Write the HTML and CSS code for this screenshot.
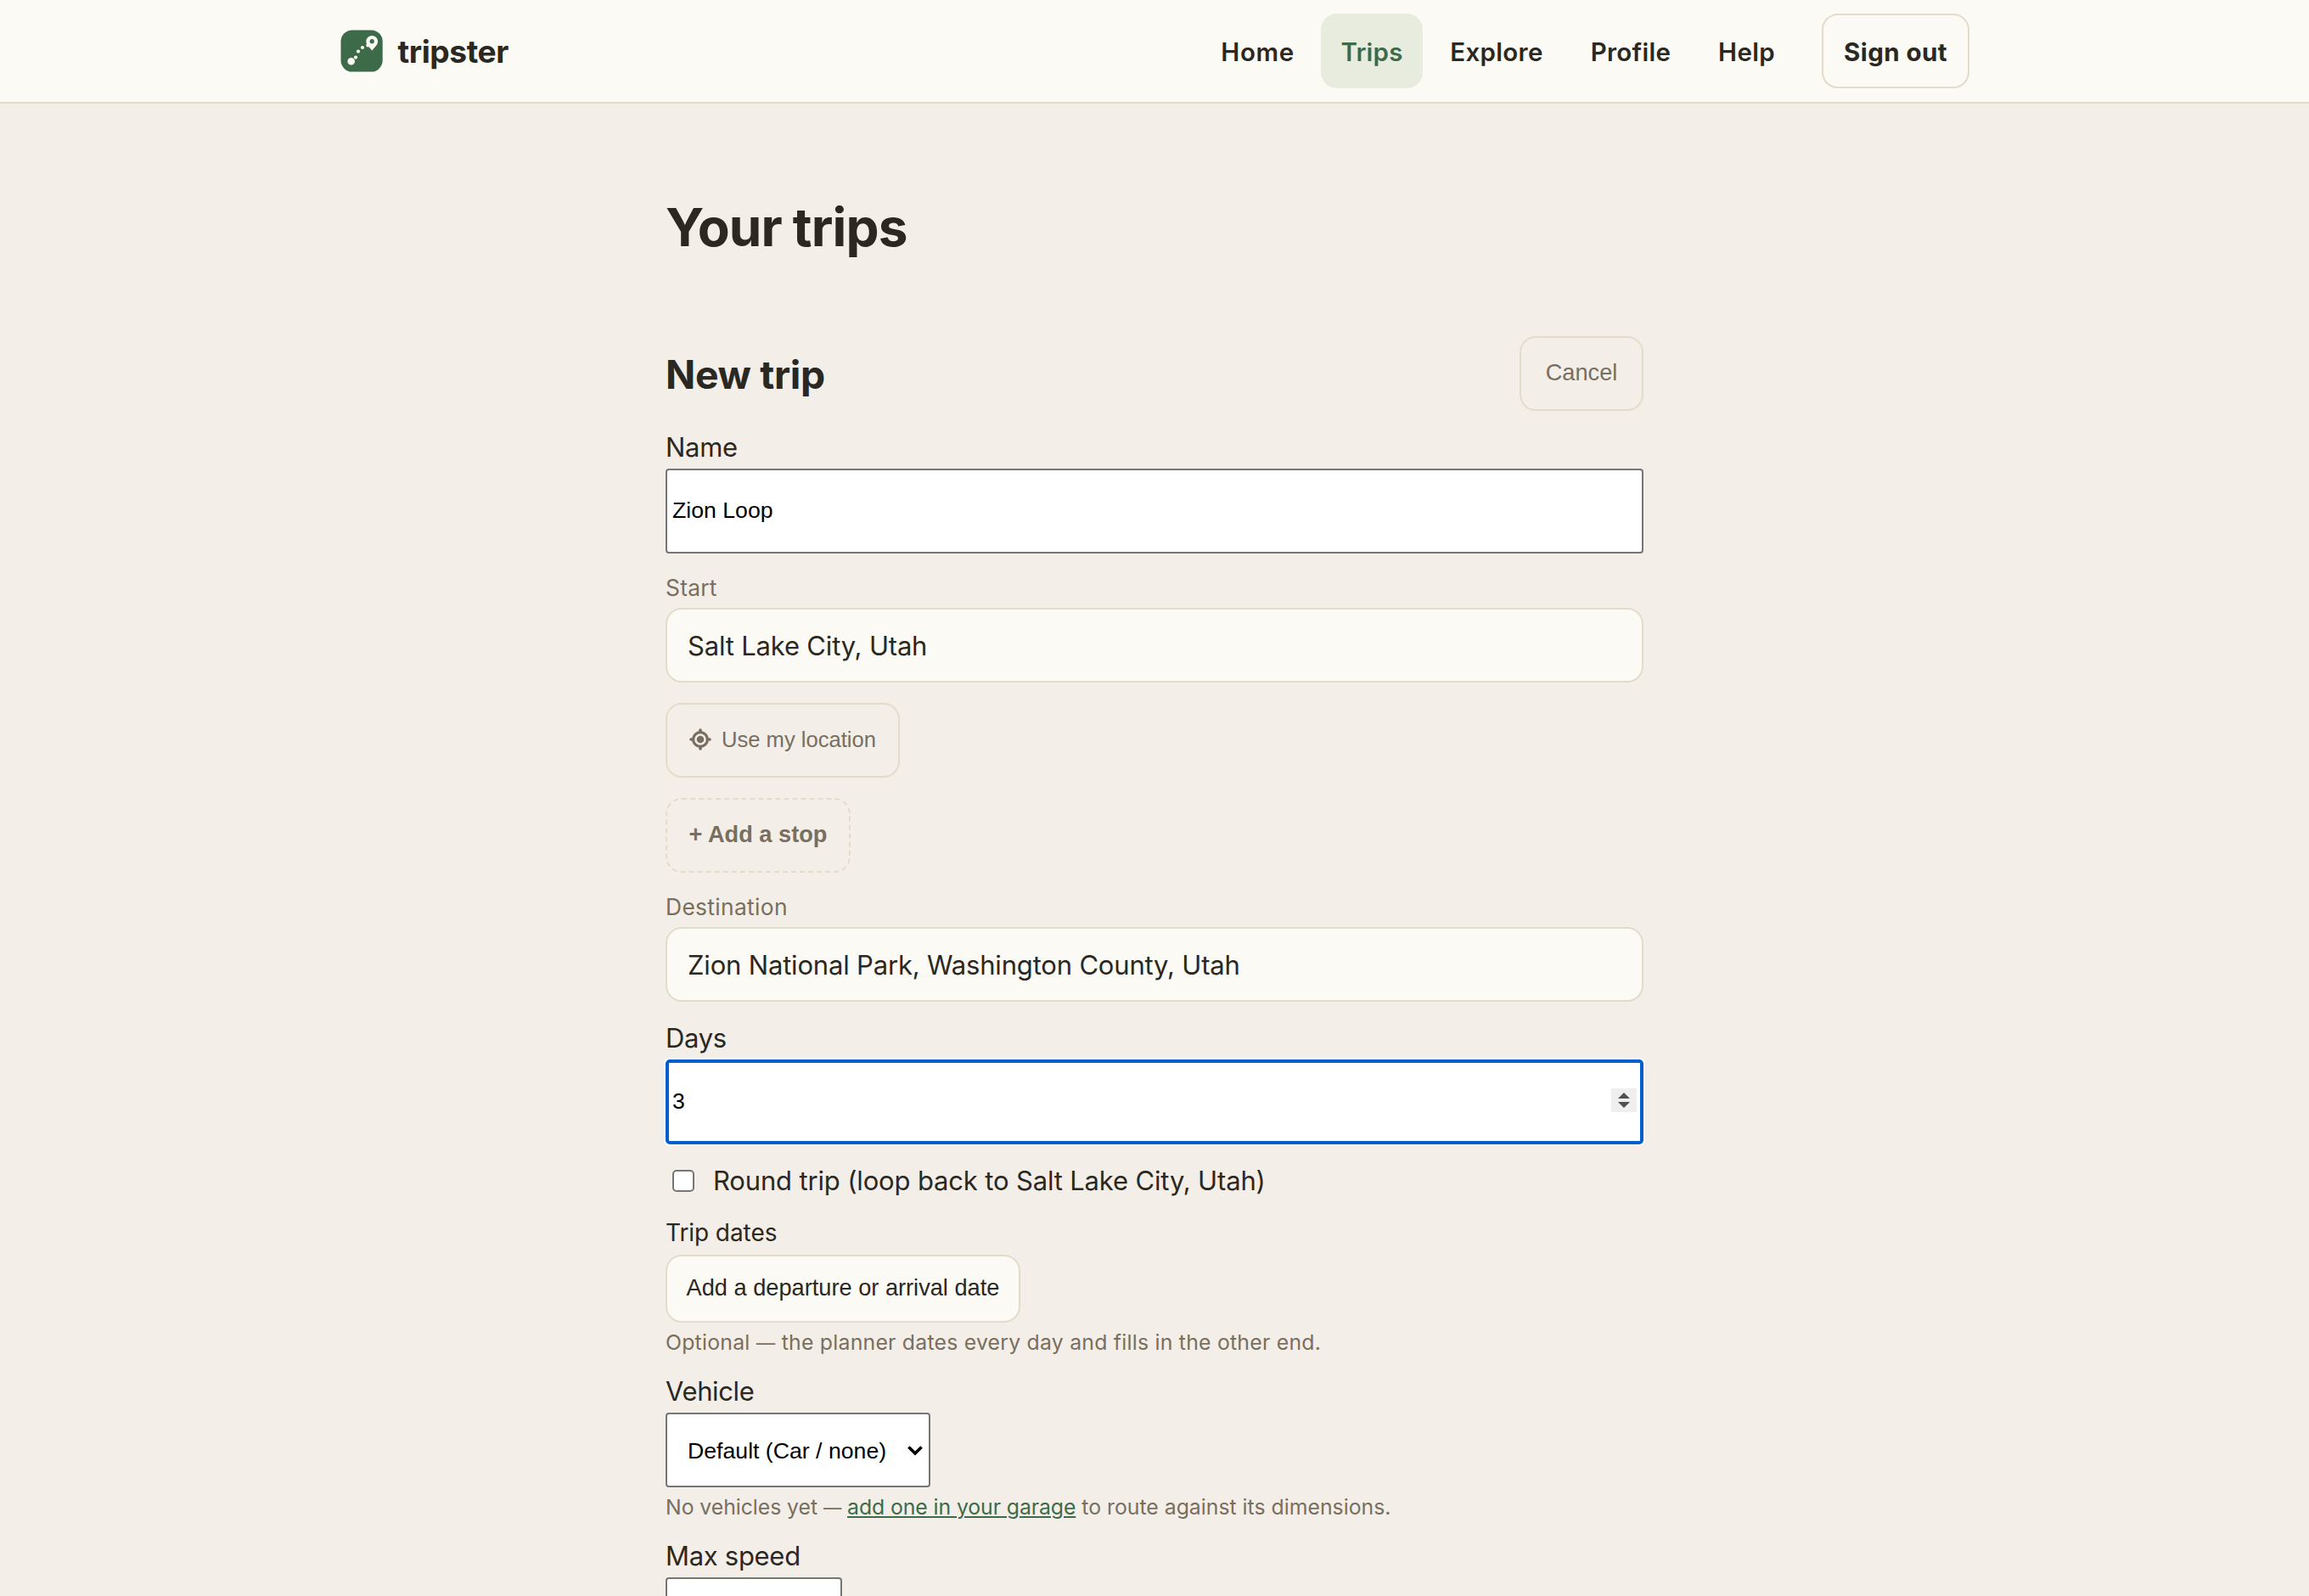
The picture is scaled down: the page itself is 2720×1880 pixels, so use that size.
FILE: index.html
```html
<!DOCTYPE html>
<html lang="en">
<head>
<meta charset="utf-8">
<title>Your trips – tripster</title>
<link rel="stylesheet" href="styles.css">
</head>
<body>
<header class="site-header">
  <a class="brand">
    <svg class="brand-mark" viewBox="0 0 50 50" aria-hidden="true">
      <rect x=".5" y=".4" width="49.2" height="49.2" rx="13.5" fill="#3d6b4a"/>
      <g fill="#fbfaf5">
        <circle cx="12.7" cy="37.2" r="4.3"/>
        <circle cx="18" cy="32.6" r="2.1"/>
        <circle cx="21" cy="25.6" r="2.1"/>
        <circle cx="26" cy="21" r="2.1"/>
        <circle cx="32.3" cy="18.4" r="2"/>
        <path d="M37.2 24.6 31.8 18.2A6.9 6.9 0 1 1 42.6 18.2Z"/>
      </g>
      <circle cx="37.2" cy="13.7" r="2.6" fill="#3d6b4a"/>
    </svg>
    <span class="brand-name">tripster</span>
  </a>
  <nav class="nav">
    <a class="nav-link home">Home</a>
    <a class="nav-link trips active">Trips</a>
    <a class="nav-link explore">Explore</a>
    <a class="nav-link profile">Profile</a>
    <a class="nav-link help">Help</a>
    <button class="sign-out" type="button">Sign out</button>
  </nav>
</header>
<main class="page">
  <h1 class="title">Your trips</h1>
  <div class="form-head">
    <h2 class="subtitle">New trip</h2>
    <button class="btn cancel" type="button">Cancel</button>
  </div>

  <label class="label" for="name">Name</label>
  <input class="plain-input" id="name" value="Zion Loop">

  <label class="label muted" for="start">Start</label>
  <input class="soft-input" id="start" value="Salt Lake City, Utah">
  <button class="btn locate" type="button">
    <svg class="locate-icon" viewBox="0 0 28 28" aria-hidden="true">
      <g fill="none" stroke="currentColor" stroke-width="3.2">
        <circle cx="14" cy="14" r="8.4"/>
        <path stroke-linecap="round" stroke-width="3.6" d="M14 3V5M14 23v2M3 14H5M23 14h2"/>
      </g>
      <circle cx="14" cy="14" r="4.3" fill="currentColor"/>
    </svg>
    Use my location
  </button>
  <button class="btn add-stop" type="button">+ Add a stop</button>

  <label class="label muted destination" for="dest">Destination</label>
  <input class="soft-input" id="dest" value="Zion National Park, Washington County, Utah">

  <label class="label" for="days">Days</label>
  <div class="days-field">
    <input class="days-input" id="days" value="3">
    <svg class="stepper" viewBox="0 0 30 28" aria-hidden="true">
      <path fill="#505050" d="M8 12 15 5l7 7zM8 16h14l-7 7z"/>
    </svg>
  </div>

  <label class="check-row"><input class="check" type="checkbox"><span class="check-text">Round trip (loop back to Salt Lake City, Utah)</span></label>

  <div class="label dates">Trip dates</div>
  <button class="date-btn" type="button">Add a departure or arrival date</button>
  <p class="hint optional">Optional <span class="dash">—</span> the planner dates every day and fills in the other end.</p>

  <div class="label after-hint vehicle">Vehicle</div>
  <div class="select">
    <span>Default (Car / none)</span>
    <svg class="chevron" viewBox="0 0 18 12" aria-hidden="true"><path d="M1.4 1.4 9 9l7.6-7.6" fill="none" stroke="#000" stroke-width="3.6"/></svg>
  </div>
  <p class="hint">No vehicles yet <span class="dash">—</span> <a class="link">add one in your garage</a><span class="tail"> to route against its dimensions.</span></p>

  <label class="label after-hint" for="speed">Max speed</label>
  <input class="plain-input speed" id="speed">
</main>
</body>
</html>
```

FILE: styles.css
```css
:root {
  --bg: #f3eee7;
  --surface: #fbfaf5;
  --line: #e4dcca;
  --ink: #2b2721;
  --muted: #786f60;
  --green: #3d6b4a;
  --ui: "Inter", sans-serif;
  --control: "Liberation Sans", Arial, sans-serif;
}

* { box-sizing: border-box; }

html, body { height: 100%; }

body {
  margin: 0;
  overflow: hidden;
  background: var(--bg);
  color: var(--ink);
  font-family: var(--ui);
  font-size: 31px;
}

input, button { margin: 0; }

.site-header {
  display: flex;
  align-items: center;
  justify-content: space-between;
  height: 122px;
  padding: 0 400px 0 401px;
  background: var(--surface);
  border-bottom: 2px solid var(--line);
}

.brand { display: flex; align-items: center; gap: 17.5px; }
.brand-mark { width: 50px; height: 50px; }
.brand-name { padding-top: 2px; font-size: 37.2px; font-weight: 700; letter-spacing: -.45px; line-height: 50px; }

.nav { display: flex; align-items: center; gap: 8px; }

.nav-link, .sign-out {
  display: flex;
  align-items: center;
  justify-content: center;
  height: 88px;
  padding: 2px 0 0;
  border-radius: 19px;
  font-family: var(--ui);
  font-size: 29.5px;
  font-weight: 600;
  letter-spacing: .3px;
  color: var(--ink);
}
.home { width: 134px; padding-left: 1px; letter-spacing: .6px; }
.trips { width: 120px; letter-spacing: .2px; }
.explore { width: 158px; }
.profile { width: 142px; }
.help { width: 116px; padding-right: 1px; }
.nav-link.active { background: #e7ecde; color: var(--green); }

.sign-out {
  width: 174px;
  margin-left: 22px;
  background: none;
  border: 2px solid var(--line);
  font-weight: 700;
  letter-spacing: .4px;
}

.page {
  display: flex;
  flex-direction: column;
  align-items: flex-start;
  width: 1152px;
  margin: 0 auto;
  padding-top: 106px;
}

.title { margin: 0; font-size: 62px; line-height: 80px; letter-spacing: -.85px; word-spacing: -1px; }

.form-head {
  display: flex;
  align-items: center;
  justify-content: space-between;
  width: 100%;
  height: 88px;
  margin-top: 88px;
}
.subtitle { margin: 0; padding-top: 2px; font-size: 46.3px; line-height: 60px; letter-spacing: -.32px; }

.label { flex: none; margin-top: 17px; line-height: 51px; letter-spacing: -.3px; }
.label.muted {
  margin: 18px 0 1px;
  line-height: 45px;
  font-size: 26.4px;
  letter-spacing: .25px;
  color: var(--muted);
}
.label.muted.destination { letter-spacing: .33px; }
.label.dates { margin: 12px 0 3px; line-height: 46px; font-size: 28px; letter-spacing: -.08px; }
.label.after-hint { margin-top: 11px; }
.label.vehicle { letter-spacing: -.38px; }

.plain-input {
  flex: none;
  width: 100%;
  height: 100px;
  padding: 0 6px 1px;
  border: 2px solid #767676;
  border-radius: 4px;
  background: #fff;
  font: 26.67px var(--control);
  color: #000;
}
.speed { width: 208px; }

.soft-input {
  flex: none;
  width: 100%;
  height: 88px;
  padding: 0 24px;
  border: 2px solid var(--line);
  border-radius: 19px;
  background: var(--surface);
  font: 31px var(--ui);
  letter-spacing: -.18px;
  color: var(--ink);
}

.btn {
  display: flex;
  flex: none;
  align-items: center;
  justify-content: center;
  height: 88px;
  padding: 0 0 3px;
  border: 2px solid var(--line);
  border-radius: 19px;
  background: none;
  font: 27.2px var(--control);
  color: var(--muted);
}
.cancel { width: 146px; }
.locate { width: 276px; margin-top: 24px; padding: 0 1px 1px 0; gap: 11px; font-size: 25.6px; }
.locate-icon { width: 28px; height: 28px; margin-bottom: 1px; }
.add-stop { width: 218px; margin-top: 24px; border-style: dashed; font-weight: 700; }

.days-field {
  display: flex;
  flex: none;
  align-items: center;
  width: 100%;
  height: 100px;
  padding: 0 4px;
  border: 4px solid #005fcc;
  border-radius: 5px;
  background: #fff;
  box-shadow: 0 0 0 2px #fff;
}
.days-input {
  flex: 1;
  height: 88px;
  padding: 0 0 2px;
  border: 0;
  outline: 0;
  background: none;
  font: 26.67px var(--control);
  color: #000;
}
.stepper { width: 30px; height: 28px; margin-bottom: 4px; background: #efefef; }

.check-row {
  display: flex;
  flex: none;
  align-items: center;
  gap: 22px;
  height: 52px;
  margin-top: 17px;
  padding-left: 8px;
  letter-spacing: -.16px;
}
.check-text { padding-bottom: 2px; }
.check {
  appearance: none;
  width: 26px;
  height: 26px;
  border: 2px solid #767676;
  border-radius: 5px;
  background: #fff;
}

.date-btn {
  flex: none;
  width: 418px;
  height: 80px;
  padding: 0 0 3px;
  border: 2px solid var(--line);
  border-radius: 19px;
  background: var(--surface);
  font: 27.2px var(--control);
  color: var(--ink);
}

.hint {
  flex: none;
  margin: 3px 0 0;
  font-size: 24.8px;
  line-height: 41px;
  letter-spacing: -.057px;
  color: var(--muted);
}
.hint.optional { letter-spacing: .23px; }
.dash { font-size: 21.3px; line-height: 1; }
.optional .dash { font-size: 22.5px; }
.link {
  color: var(--green);
  letter-spacing: -.09px;
  text-decoration: underline;
  text-decoration-thickness: 2px;
  text-underline-offset: 2px;
}
.tail { letter-spacing: 0; }

.select {
  display: flex;
  flex: none;
  align-items: center;
  justify-content: space-between;
  width: 312px;
  height: 88px;
  padding: 2px 7px 0 24px;
  border: 2px solid #767676;
  border-radius: 4px;
  background: #fff;
  font: 26.67px var(--control);
  color: #000;
}
.chevron { width: 18px; height: 12px; }
```
